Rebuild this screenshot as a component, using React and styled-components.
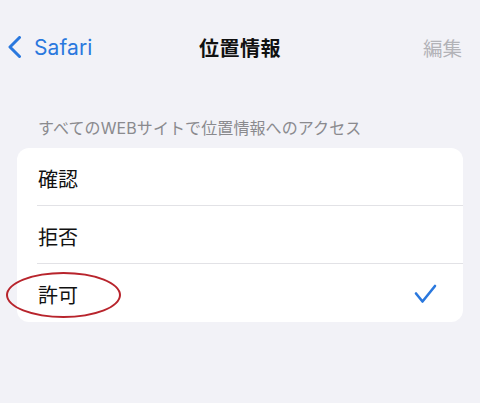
import React from "react";
import styled, { createGlobalStyle } from "styled-components";

const COLORS = {
  background: "#f2f2f7",
  card: "#ffffff",
  blue: "#2a78de",
  label: "#8a8a8e",
  disabled: "#b3b3b8",
  divider: "#e2e2e6",
  text: "#111111",
  annotation: "#b8242c",
};

const FONT = `Inter, "Noto Sans CJK JP", sans-serif`;

const GlobalStyle = createGlobalStyle`
  html, body {
    margin: 0;
    padding: 0;
    background: ${COLORS.background};
  }
  body {
    font-family: ${FONT};
    -webkit-font-smoothing: antialiased;
  }
`;

const options = [
  { id: "ask", label: "確認" },
  { id: "deny", label: "拒否" },
  { id: "allow", label: "許可", checked: true, circled: true },
];

const App = () => {
  return (
    <Page>
      <GlobalStyle />
      <NavBar>
        <BackButton>
          <svg width="16" height="22" viewBox="0 0 16 22" fill="none">
            <path
              d="M12.5 1.5 L3 11 L12.5 20.5"
              stroke={COLORS.blue}
              strokeWidth="3"
              strokeLinecap="round"
              strokeLinejoin="round"
            />
          </svg>
          <BackLabel>Safari</BackLabel>
        </BackButton>
        <Title>位置情報</Title>
        <EditButton>編集</EditButton>
      </NavBar>

      <SectionHeader>すべてのWEBサイトで位置情報へのアクセス</SectionHeader>

      <Card>
        {options.map((option, i) => (
          <Row key={option.id} last={i === options.length - 1}>
            <RowLabel>{option.label}</RowLabel>
            {option.circled && <Annotation />}
            {option.checked && (
              <svg width="23" height="20" viewBox="0 0 23 20" fill="none">
                <path
                  d="M2 9.5 L8.5 17.5 L21 2"
                  stroke={COLORS.blue}
                  strokeWidth="2.6"
                  strokeLinecap="round"
                  strokeLinejoin="round"
                />
              </svg>
            )}
          </Row>
        ))}
      </Card>
    </Page>
  );
};

const Page = styled.div`
  width: 480px;
  height: 403px;
  background: ${COLORS.background};
  overflow: hidden;
`;

// Navigation bar
const NavBar = styled.div`
  display: grid;
  grid-template-columns: 1fr auto 1fr;
  align-items: center;
  height: 40px;
  margin-top: 27px;
  padding: 0 18px;
`;

const BackButton = styled.div`
  display: flex;
  align-items: center;
  gap: 11px;
  margin-left: -11px;
  color: ${COLORS.blue};
`;

const BackLabel = styled.span`
  font-size: 21px;
  letter-spacing: 0.1px;
`;

const Title = styled.h1`
  margin: 0;
  font-size: 20px;
  font-weight: 700;
  color: ${COLORS.text};
  letter-spacing: 0.5px;
`;

const EditButton = styled.span`
  justify-self: end;
  font-size: 19.5px;
  color: ${COLORS.disabled};
`;

// Section
const SectionHeader = styled.div`
  margin: 51px 0 10px;
  padding-left: 38px;
  font-size: 16px;
  line-height: 20px;
  color: ${COLORS.label};
  letter-spacing: 0.1px;
`;

const Card = styled.div`
  margin: 0 17px;
  background: ${COLORS.card};
  border-radius: 12px;
`;

const Row = styled.div`
  position: relative;
  display: flex;
  align-items: center;
  justify-content: space-between;
  height: 58px;
  padding: 2px 26px 0 21px;
  box-sizing: border-box;

  &::after {
    content: "";
    display: ${(p) => (p.last ? "none" : "block")};
    position: absolute;
    left: 20px;
    right: 0;
    bottom: 0;
    height: 1px;
    background: ${COLORS.divider};
  }
`;

const RowLabel = styled.span`
  font-size: 20px;
  color: ${COLORS.text};
`;

// red hand-drawn circle around the selected option
const Annotation = styled.div`
  position: absolute;
  left: -11px;
  top: 8px;
  width: 111px;
  height: 42px;
  border: 2px solid ${COLORS.annotation};
  border-radius: 50%;
  pointer-events: none;
`;

export default App;
